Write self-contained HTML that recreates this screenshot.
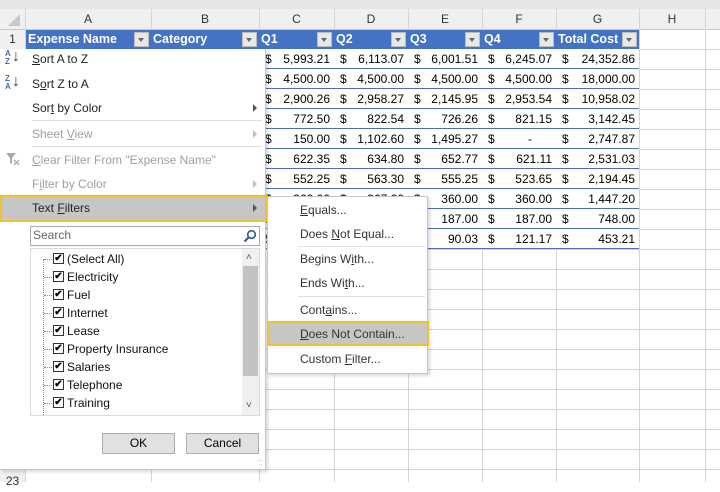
<!DOCTYPE html>
<html><head><meta charset="utf-8"><style>
*{margin:0;padding:0;box-sizing:border-box}
body{width:720px;height:482px;overflow:hidden;background:#fff;font-family:"Liberation Sans",sans-serif;font-size:12px;color:#000;position:relative}
.a{position:absolute}
.hl{position:absolute;left:0;width:720px;height:1px;background:#d4d4d4}
.vl{position:absolute;top:9px;height:473px;width:1px;background:#d4d4d4}
.ch{position:absolute;top:9px;height:20px;line-height:20px;text-align:center;color:#333;font-size:12px}
.cell{position:absolute;height:20px;line-height:20px;font-size:12px;white-space:pre}
.mi{position:absolute;left:32px;font-size:12px;color:#222}
.dis{color:#a0a0a0}
.arr{position:absolute;left:253px;width:0;height:0;border-left:4px solid #555;border-top:4px solid transparent;border-bottom:4px solid transparent}
.sep{position:absolute;height:1px;background:#e0e0e0}
.li{position:absolute;left:67px;font-size:12px;color:#111}
.cb{position:absolute;left:53px;width:11px;height:11px;border:1px solid #333;background:#fff;font-size:10px;line-height:9px;text-align:center;font-weight:bold}
.si{position:absolute;left:300px;font-size:12px;color:#333}
u{text-decoration:underline}
</style></head><body>
<div class="a" style="left:0;top:0;width:720px;height:9px;background:#e6e6e6"></div>
<div class="a" style="left:0;top:9px;width:720px;height:20px;background:#f0f0f0"></div>
<div class="a" style="left:0;top:9px;width:25px;height:473px;background:#f0f0f0"></div>
<div class="a" style="left:8px;top:14px;width:0;height:0;border-right:12px solid #c8c8c8;border-top:12px solid transparent"></div>
<div class="hl" style="top:29px;background:#c8c8c8"></div>
<div class="hl" style="top:269px"></div><div class="hl" style="top:289px"></div><div class="hl" style="top:309px"></div><div class="hl" style="top:329px"></div><div class="hl" style="top:349px"></div><div class="hl" style="top:369px"></div><div class="hl" style="top:389px"></div><div class="hl" style="top:409px"></div><div class="hl" style="top:429px"></div><div class="hl" style="top:449px"></div><div class="hl" style="top:469px"></div>
<div class="hl" style="top:69px"></div><div class="hl" style="top:89px"></div><div class="hl" style="top:109px"></div><div class="hl" style="top:129px"></div><div class="hl" style="top:149px"></div><div class="hl" style="top:169px"></div><div class="hl" style="top:189px"></div><div class="hl" style="top:209px"></div><div class="hl" style="top:229px"></div><div class="hl" style="top:249px"></div><div class="hl" style="top:49px"></div>
<div class="vl" style="left:25px"></div><div class="vl" style="left:151px"></div><div class="vl" style="left:259px"></div><div class="vl" style="left:334px"></div><div class="vl" style="left:408px"></div><div class="vl" style="left:482px"></div><div class="vl" style="left:556px"></div><div class="vl" style="left:639px"></div><div class="vl" style="left:705px"></div>
<div class="ch" style="left:25px;width:126px">A</div><div class="ch" style="left:151px;width:108px">B</div><div class="ch" style="left:259px;width:75px">C</div><div class="ch" style="left:334px;width:74px">D</div><div class="ch" style="left:408px;width:74px">E</div><div class="ch" style="left:482px;width:74px">F</div><div class="ch" style="left:556px;width:83px">G</div><div class="ch" style="left:639px;width:66px">H</div>
<div class="ch" style="left:0;top:29px;width:25px">1</div>
<div class="ch" style="left:0;top:470px;width:25px;height:12px;line-height:22px">23</div>
<div class="a" style="left:26px;top:30px;width:613px;height:19px;background:#4472c4"></div>
<div class="a" style="left:28px;top:30px;color:#fff;font-weight:bold;font-size:12.5px;line-height:19px">Expense Name</div>
<div class="a" style="left:153px;top:30px;color:#fff;font-weight:bold;font-size:12.5px;line-height:19px">Category</div>
<div class="a" style="left:261px;top:30px;color:#fff;font-weight:bold;font-size:12.5px;line-height:19px">Q1</div>
<div class="a" style="left:336px;top:30px;color:#fff;font-weight:bold;font-size:12.5px;line-height:19px">Q2</div>
<div class="a" style="left:410px;top:30px;color:#fff;font-weight:bold;font-size:12.5px;line-height:19px">Q3</div>
<div class="a" style="left:484px;top:30px;color:#fff;font-weight:bold;font-size:12.5px;line-height:19px">Q4</div>
<div class="a" style="left:558px;top:30px;color:#fff;font-weight:bold;font-size:12.5px;line-height:19px">Total Cost</div>
<div id="dd"></div>
<div class="a" style="left:259px;top:49px;width:380px;height:200px;background:#fff"></div>
<div id="rows"></div>
<div class="a" style="left:0;top:49px;width:266px;height:421px;background:#fff;border-right:1px solid #c6c6c6;border-bottom:1px solid #c6c6c6;box-shadow:2px 2px 3px rgba(0,0,0,.15)"></div>
<div class="a" style="left:5px;top:50px;font-size:8px;line-height:8px;color:#4a6fb0;font-weight:bold">A<br>Z</div><div class="a" style="left:12px;top:48px;font-size:16px;color:#444">↓</div>
<div class="a" style="left:5px;top:75px;font-size:8px;line-height:8px;color:#4a6fb0;font-weight:bold">Z<br>A</div><div class="a" style="left:12px;top:73px;font-size:16px;color:#444">↓</div>
<div class="mi" style="top:52px"><u>S</u>ort A to Z</div>
<div class="mi" style="top:77px">S<u>o</u>rt Z to A</div>
<div class="mi" style="top:101px">Sor<u>t</u> by Color</div><div class="arr" style="top:104px"></div>
<div class="sep" style="left:32px;top:120px;width:230px"></div>
<div class="mi dis" style="top:127px">Sheet <u>V</u>iew</div><div class="arr" style="top:130px;border-left-color:#bbb"></div>
<div class="sep" style="left:32px;top:146px;width:230px"></div>
<svg class="a" style="left:5px;top:152px" width="16" height="14"><path d="M1 1h10l-4 5v5l-2 1v-6z" fill="#aaa"/><path d="M9 8l5 5M14 8l-5 5" stroke="#aaa" stroke-width="1.3"/></svg>
<div class="mi dis" style="top:153px"><u>C</u>lear Filter From "Expense Name"</div>
<div class="mi dis" style="top:177px">F<u>i</u>lter by Color</div><div class="arr" style="top:180px;border-left-color:#bbb"></div>
<div class="a" style="left:0;top:195px;width:267px;height:27px;background:#c6c6c6;border:2px solid #f2c12e"></div>
<div class="mi" style="top:201px">Text <u>F</u>ilters</div><div class="arr" style="top:204px"></div>
<div class="a" style="left:30px;top:226px;width:230px;height:20px;border:1px solid #a9a9a9;background:#fff"></div>
<div class="a" style="left:33px;top:228px;color:#666;font-size:12px">Search</div>
<svg class="a" style="left:243px;top:229px" width="14" height="14"><circle cx="8.5" cy="5.5" r="3.8" fill="none" stroke="#2d5a9e" stroke-width="1.6"/><path d="M6 8l-4.5 4.5" stroke="#2d5a9e" stroke-width="2"/></svg>
<div class="a" style="left:30px;top:248px;width:230px;height:168px;border:1px solid #dadada;background:#fff"></div>
<div class="a" style="left:242px;top:249px;width:17px;height:166px;background:#f0f0f0"></div>
<div class="a" style="left:243px;top:266px;width:15px;height:110px;background:#c2c2c2"></div>
<div class="a" style="left:246px;top:252px;font-size:10px;color:#555">˄</div>
<div class="a" style="left:246px;top:400px;font-size:10px;color:#555">˅</div>
<div class="a" style="left:43px;top:259px;width:0;height:156px;border-left:1px dotted #888"></div>
<div id="list"></div>
<div class="a" style="left:102px;top:433px;width:73px;height:21px;background:#e1e1e1;border:1px solid #adadad;text-align:center;line-height:19px">OK</div>
<div class="a" style="left:186px;top:433px;width:73px;height:21px;background:#e1e1e1;border:1px solid #adadad;text-align:center;line-height:19px">Cancel</div>
<div class="a" style="left:258px;top:462px;font-size:7px;color:#999;line-height:4px">⁚⁚</div>
<div class="a" style="left:267px;top:196px;width:161px;height:178px;background:#fff;border:1px solid #c6c6c6;box-shadow:2px 2px 3px rgba(0,0,0,.15)"></div>
<div class="si" style="top:203px"><u>E</u>quals...</div>
<div class="si" style="top:227px">Does <u>N</u>ot Equal...</div>
<div class="sep" style="left:298px;top:246px;width:127px"></div>
<div class="si" style="top:252px">Begins W<u>i</u>th...</div>
<div class="si" style="top:276px">Ends Wi<u>t</u>h...</div>
<div class="sep" style="left:298px;top:296px;width:127px"></div>
<div class="si" style="top:303px">Cont<u>a</u>ins...</div>
<div class="a" style="left:267px;top:321px;width:162px;height:25px;background:#c6c6c6;border:2px solid #f2c12e"></div>
<div class="si" style="top:327px"><u>D</u>oes Not Contain...</div>
<div class="si" style="top:352px">Custom <u>F</u>ilter...</div>
<script>
var dd=[134,242,317,391,465,539,622],h='';
dd.forEach(function(x){h+='<div class="a" style="left:'+x+'px;top:32px;width:15px;height:15px;background:#e8e8e8;border:1px solid #bbb"></div><div class="a" style="left:'+(x+4)+'px;top:38px;border-top:4px solid #666;border-left:3.5px solid transparent;border-right:3.5px solid transparent"></div>'});
document.getElementById('dd').innerHTML=h;
var R=[["$5,993.21","$6,113.07","$6,001.51","$6,245.07","$ 24,352.86"],["$4,500.00","$4,500.00","$4,500.00","$4,500.00","$ 18,000.00"],["$2,900.26","$2,958.27","$2,145.95","$2,953.54","$ 10,958.02"],["$   772.50","$   822.54","$   726.26","$   821.15","$   3,142.45"],["$   150.00","$1,102.60","$1,495.27","$         -","$   2,747.87"],["$   622.35","$   634.80","$   652.77","$   621.11","$   2,531.03"],["$   552.25","$   563.30","$   555.25","$   523.65","$   2,194.45"],["$   360.00","$   367.20","$   360.00","$   360.00","$   1,447.20"],["$   187.00","$   187.00","$   187.00","$   187.00","$      748.00"],["$   121.23","$   120.60","$     90.03","$   121.17","$      453.21"]];
var X=[259,334,408,482,556],W=[75,74,74,74,83];h='';
R.forEach(function(r,i){var y=49+i*20;h+='<div class="a" style="left:26px;top:'+(y+19)+'px;width:613px;height:1px;background:#4a6fb5"></div>';
r.forEach(function(v,j){var m=v.match(/^\$(\s*)(.*)$/);h+='<div class="cell" style="left:'+(X[j]+6)+'px;top:'+y+'px">$</div><div class="cell" style="left:'+X[j]+'px;width:'+(W[j]-4)+'px;text-align:right;top:'+y+'px">'+m[2]+(m[2]=='-'?'&nbsp;&nbsp;&nbsp;&nbsp;&nbsp;&nbsp;':'')+'</div>'})});
document.getElementById('rows').innerHTML=h;
var L=["(Select All)","Electricity","Fuel","Internet","Lease","Property Insurance","Salaries","Telephone","Training"];h='';
L.forEach(function(t,i){var y=252+i*18;h+='<div class="a" style="left:44px;top:'+(y+7)+'px;width:8px;border-top:1px dotted #888"></div><div class="cb" style="top:'+(y+1)+'px">✔</div><div class="li" style="top:'+y+'px">'+t+'</div>'});
document.getElementById('list').innerHTML=h;
</script>
</body></html>
